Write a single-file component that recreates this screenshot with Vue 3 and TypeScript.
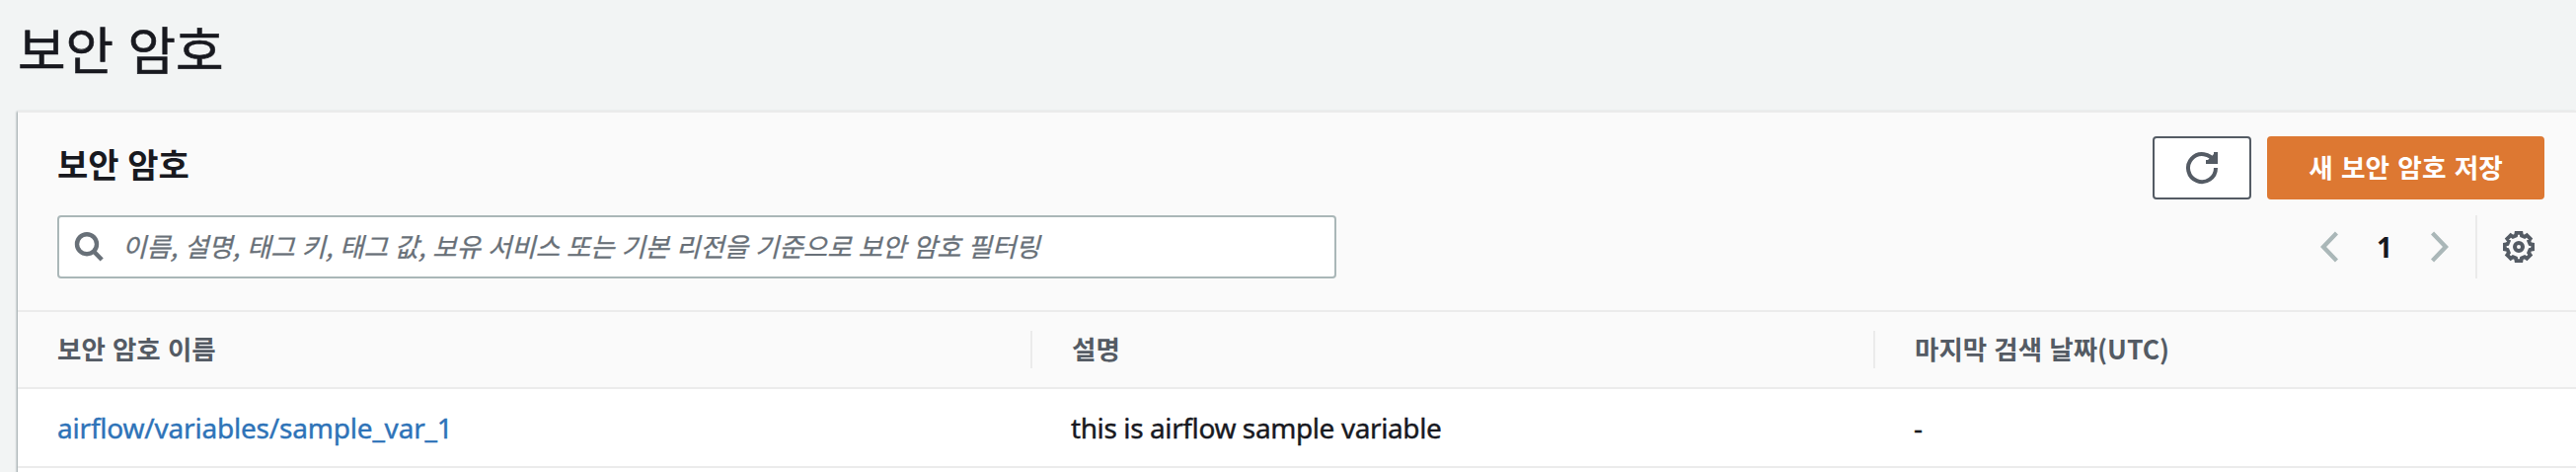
<script setup lang="ts">
interface Secret {
  name: string
  description: string
  lastRetrieved: string
}

const columns: string[] = ['보안 암호 이름', '설명', '마지막 검색 날짜(UTC)']
const secrets: Secret[] = [
  { name: 'airflow/variables/sample_var_1', description: 'this is airflow sample variable', lastRetrieved: '-' },
]

// Closed gear outline with eight flat teeth, centred in a 16-unit box.
const gearPath = Array.from({ length: 8 }, (_, i) => {
  const tooth: [number, number][] = [[-14.5, 5.9], [-10, 7.15], [10, 7.15], [14.5, 5.9]]
  return tooth
    .map(([offset, radius]) => {
      const angle = ((i * 45 + offset) * Math.PI) / 180
      return `${(8 + radius * Math.sin(angle)).toFixed(2)} ${(8 - radius * Math.cos(angle)).toFixed(2)}`
    })
    .join('L')
}).join('L')
</script>

<template>
  <main class="page">
    <h1 class="page-title">보안 암호</h1>
    <section class="panel">
      <header class="panel-head">
        <div class="head-row">
          <h2 class="panel-title">보안 암호</h2>
          <div class="actions">
            <button class="button refresh" aria-label="새로 고침">
              <svg class="icon" viewBox="0 0 16 16">
                <path class="stroke" d="M15 8a7 7 0 1 1-.7-3" />
                <path class="solid" d="M10 5h5V0z" />
                <path class="stroke" d="M10 5h5V0" />
              </svg>
            </button>
            <button class="button primary"><span>새 보안 암호 저장</span></button>
          </div>
        </div>
        <div class="tool-row">
          <label class="search">
            <svg class="search-icon" viewBox="0 0 30 32">
              <circle cx="13" cy="13.2" r="10" />
              <path d="M19.8 20.4L28.2 29" />
            </svg>
            <span class="placeholder">이름, 설명, 태그 키, 태그 값, 보유 서비스 또는 기본 리전을 기준으로 보안 암호 필터링</span>
          </label>
          <nav class="pager">
            <svg class="chevron" viewBox="0 0 18 32"><path d="M16.500 2L3 16l13.500 14" /></svg>
            <span class="page-number">1</span>
            <svg class="chevron" viewBox="0 0 18 32"><path d="M1.500 2L15 16L1.500 30" /></svg>
            <span class="divider"></span>
            <svg class="icon" viewBox="0 0 16 16">
              <path class="stroke gear" :d="`M${gearPath}Z`" />
              <circle class="stroke" cx="8" cy="8" r="2" />
            </svg>
          </nav>
        </div>
      </header>
      <div class="grid-row table-head">
        <div v-for="column in columns" :key="column" class="head-cell"><span>{{ column }}</span></div>
      </div>
      <div v-for="secret in secrets" :key="secret.name" class="grid-row table-row">
        <div class="cell"><a class="link">{{ secret.name }}</a></div>
        <div class="cell"><span class="desc">{{ secret.description }}</span></div>
        <div class="cell">{{ secret.lastRetrieved }}</div>
      </div>
    </section>
  </main>
</template>

<style>
body {
  background: #f2f4f4;
}
</style>

<style scoped>
* {
  box-sizing: border-box;
}

.page {
  height: 478px;
  padding-left: 18px;
  overflow: hidden;
  background: #f2f4f4;
  color: #18191f;
  font-family: "Noto Sans", "Noto Sans CJK KR", sans-serif;
  font-size: 28px;
}

.page-title {
  height: 112px;
  margin: 0;
  padding-top: 8px;
  font: 400 52.8px/80px "Noto Sans CJK KR", sans-serif;
  word-spacing: 2.5px;
  -webkit-text-stroke: 0.6px currentColor;
}

.panel {
  height: 400px;
  border-top: 2px solid #ebebeb;
  background: #fff;
  box-shadow: -1px 1px 2px rgba(0, 28, 36, 0.4);
}

.panel-head {
  height: 202px;
  padding: 24px 32px 0 40px;
  border-bottom: 2px solid #ebebeb;
  background: #fafafa;
}

.head-row,
.tool-row {
  display: flex;
  justify-content: space-between;
  height: 64px;
}

.tool-row {
  margin-top: 16px;
}

.panel-title {
  margin: 0;
  font: 700 34px/56px "Noto Sans CJK KR", sans-serif;
  word-spacing: 1px;
}

.actions {
  display: flex;
  gap: 16px;
}

.button {
  display: flex;
  align-items: center;
  justify-content: center;
  height: 64px;
  padding: 0;
  border: 2px solid #545b64;
  border-radius: 4px;
  background: #fff;
}

.refresh {
  width: 100px;
}

.primary {
  width: 281px;
  padding-bottom: 2px;
  border-color: #dd7832;
  background: #dd7832;
  color: #fff;
  font: 700 26.7px/40px "Noto Sans CJK KR", sans-serif;
  word-spacing: 2.2px;
}

.icon {
  width: 32px;
  height: 32px;
  overflow: visible;
}

.stroke {
  fill: none;
  stroke: #545b64;
  stroke-width: 2;
}

.gear {
  stroke-width: 1.9;
}

.solid {
  fill: #545b64;
}

.search {
  display: flex;
  align-items: center;
  width: 1296px;
  height: 64px;
  padding-left: 15px;
  border: 2px solid #aab7b8;
  border-radius: 4px;
  background: #fff;
}

.search-icon {
  width: 30px;
  height: 32px;
  fill: none;
  stroke: #687078;
  stroke-width: 4.4;
}

.placeholder {
  margin: -2px 0 0 19px;
  color: #687078;
  font: italic 400 26.5px/40px "Noto Sans CJK KR", sans-serif;
  white-space: nowrap;
  word-spacing: 0.9px;
  -webkit-text-stroke: 0.3px currentColor;
}

.pager {
  display: flex;
  align-items: center;
  padding-right: 10px;
}

.chevron {
  width: 18px;
  height: 32px;
  fill: none;
  stroke: #aab7b8;
  stroke-width: 4.4;
}

.page-number {
  width: 94px;
  font-weight: 700;
  font-size: 28px;
  text-align: center;
}

.divider {
  width: 2px;
  height: 64px;
  margin: 0 26px 0 27px;
  background: #ebebeb;
}

.grid-row {
  display: grid;
  grid-template-columns: 1028px 854px 1fr;
  align-items: center;
  border-bottom: 2px solid #ebebeb;
}

.table-head {
  height: 78px;
  background: #fafafa;
  color: #545b64;
  font: 700 26.5px/35px "Noto Sans CJK KR", sans-serif;
  word-spacing: 1.2px;
}

.head-cell {
  height: 38px;
  padding-left: 40px;
  border-right: 2px solid #ebebeb;
}

.head-cell:last-child {
  border-right: 0;
}

.table-row {
  height: 80px;
}

.cell {
  padding-left: 39px;
  line-height: 40px;
  letter-spacing: -0.2px;
  -webkit-text-stroke: 0.4px currentColor;
}

.cell:first-child {
  padding-left: 40px;
}

.desc {
  letter-spacing: -0.4px;
}

.link {
  color: #2e73b8;
}
</style>
